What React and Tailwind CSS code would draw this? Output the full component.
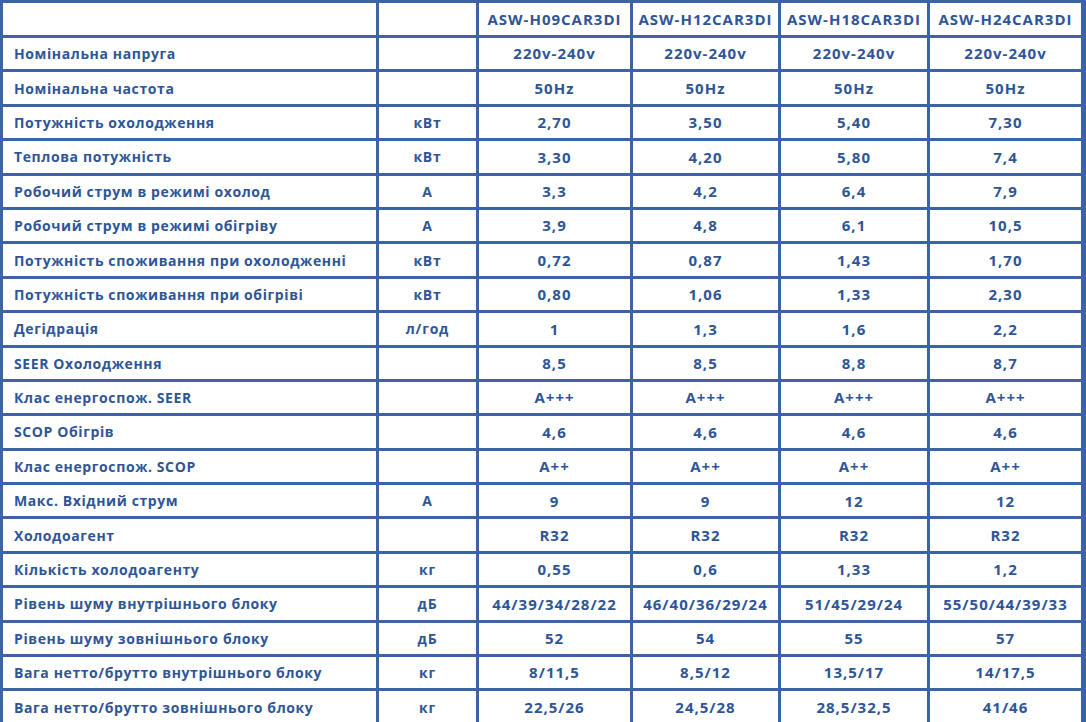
import React from 'react';

// Модели и строки характеристик
const models = ['ASW-H09CAR3DI', 'ASW-H12CAR3DI', 'ASW-H18CAR3DI', 'ASW-H24CAR3DI'];

const rows = [
  ['Номінальна напруга', '', '220v-240v', '220v-240v', '220v-240v', '220v-240v'],
  ['Номінальна частота', '', '50Hz', '50Hz', '50Hz', '50Hz'],
  ['Потужність охолодження', 'кВт', '2,70', '3,50', '5,40', '7,30'],
  ['Теплова потужність', 'кВт', '3,30', '4,20', '5,80', '7,4'],
  ['Робочий струм в режимі охолод', 'A', '3,3', '4,2', '6,4', '7,9'],
  ['Робочий струм в режимі обігріву', 'A', '3,9', '4,8', '6,1', '10,5'],
  ['Потужність споживання при охолодженні', 'кВт', '0,72', '0,87', '1,43', '1,70'],
  ['Потужність споживання при обігріві', 'кВт', '0,80', '1,06', '1,33', '2,30'],
  ['Дегідрація', 'л/год', '1', '1,3', '1,6', '2,2'],
  ['SEER Охолодження', '', '8,5', '8,5', '8,8', '8,7'],
  ['Клас енергоспож. SEER', '', 'A+++', 'A+++', 'A+++', 'A+++'],
  ['SCOP Обігрів', '', '4,6', '4,6', '4,6', '4,6'],
  ['Клас енергоспож. SCOP', '', 'A++', 'A++', 'A++', 'A++'],
  ['Макс. Вхідний струм', 'A', '9', '9', '12', '12'],
  ['Холодоагент', '', 'R32', 'R32', 'R32', 'R32'],
  ['Кількість холодоагенту', 'кг', '0,55', '0,6', '1,33', '1,2'],
  ['Рівень шуму внутрішнього блоку', 'дБ', '44/39/34/28/22', '46/40/36/29/24', '51/45/29/24', '55/50/44/39/33'],
  ['Рівень шуму зовнішнього блоку', 'дБ', '52', '54', '55', '57'],
  ['Вага нетто/брутто внутрішнього блоку', 'кг', '8/11,5', '8,5/12', '13,5/17', '14/17,5'],
  ['Вага нетто/брутто зовнішнього блоку', 'кг', '22,5/26', '24,5/28', '28,5/32,5', '41/46'],
];

export default function App() {
  return (
    <div className="w-[1086px] h-[722px] overflow-hidden bg-[#3b63a5] pr-[2px] font-['Open_Sans',sans-serif] text-[#2e5597]">
      <table className="w-full table-fixed border-separate border-spacing-[3px] font-bold">
        <colgroup>
          <col className="w-[373px]" />
          <col className="w-[97px]" />
          <col className="w-[151px]" />
          <col className="w-[145px]" />
          <col className="w-[146px]" />
          <col />
        </colgroup>
        <thead>
          <tr className="h-[32px]">
            <th className="bg-white" />
            <th className="bg-white" />
            {models.map((m) => (
              <th key={m} className="bg-white text-center text-[15px] font-bold tracking-[1px] whitespace-nowrap">{m}</th>
            ))}
          </tr>
        </thead>
        <tbody>
          {rows.map((r, i) => (
            <tr key={i} className="h-[31.4px]">
              <td className="bg-white pl-[11px] text-left text-[14px] tracking-[0.6px]">{r[0]}</td>
              <td className="bg-white text-center text-[14px] tracking-[0.8px]">{r[1]}</td>
              {r.slice(2).map((v, j) => (
                <td key={j} className="bg-white text-center text-[15px] tracking-[1px] whitespace-nowrap">{v}</td>
              ))}
            </tr>
          ))}
        </tbody>
      </table>
    </div>
  );
}
